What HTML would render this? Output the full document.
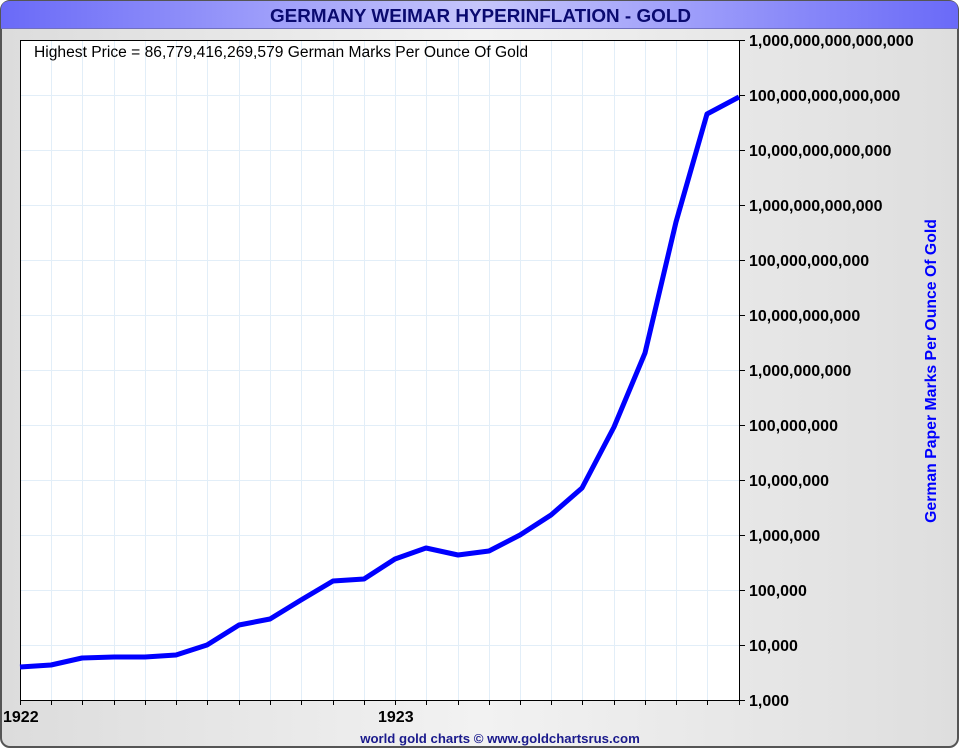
<!DOCTYPE html>
<html><head><meta charset="utf-8"><style>
html,body{margin:0;padding:0;width:960px;height:750px;overflow:hidden;background:#fff}
svg{display:block}
text{font-family:"Liberation Sans",Arial,sans-serif}
</style></head><body>
<svg width="960" height="750" viewBox="0 0 960 750" xmlns="http://www.w3.org/2000/svg">
<defs>
<linearGradient id="bg" x1="0" x2="1" y1="0" y2="0">
<stop offset="0" stop-color="#dcdcdc"/><stop offset="0.5" stop-color="#f2f2f2"/><stop offset="1" stop-color="#dedede"/>
</linearGradient>
<linearGradient id="hd" x1="0" x2="1" y1="0" y2="0">
<stop offset="0" stop-color="#6a6af8"/><stop offset="0.5" stop-color="#c6c6fb"/><stop offset="1" stop-color="#6a6af8"/>
</linearGradient>
</defs>
<rect x="0" y="0" width="960" height="750" fill="#fff"/>
<rect x="1" y="1" width="957" height="746" rx="9" fill="url(#bg)" stroke="#555" stroke-width="2"/>
<path d="M1 28 V10 Q1 1 10 1 H949 Q958 1 958 10 V28 Z" fill="url(#hd)"/>
<line x1="1" y1="28.5" x2="958" y2="28.5" stroke="#7070c0" stroke-width="1"/>
<text x="270" y="22" textLength="421" lengthAdjust="spacingAndGlyphs" font-size="18.5" font-weight="bold" fill="#0a0a70">GERMANY WEIMAR HYPERINFLATION - GOLD</text>
<rect x="20" y="40" width="720" height="660" fill="#fff"/>
<g stroke="#e2eef8" stroke-width="1">
<path d="M51.5 40V700M82.5 40V700M114.5 40V700M145.5 40V700M176.5 40V700M207.5 40V700M239.5 40V700M270.5 40V700M301.5 40V700M333.5 40V700M364.5 40V700M395.5 40V700M426.5 40V700M458.5 40V700M489.5 40V700M520.5 40V700M551.5 40V700M582.5 40V700M614.5 40V700M645.5 40V700M676.5 40V700M707.5 40V700"/>
<path d="M20 95.5H740M20 150.5H740M20 205.5H740M20 260.5H740M20 315.5H740M20 370.5H740M20 425.5H740M20 480.5H740M20 535.5H740M20 590.5H740M20 645.5H740"/>
</g>
<path d="M20.5 40.5H739.5V700.5H20.5Z" fill="none" stroke="#000" stroke-width="1"/>
<g stroke="#000" stroke-width="1">
<path d="M20.5 700V705M51.5 700V705M82.5 700V705M114.5 700V705M145.5 700V705M176.5 700V705M207.5 700V705M239.5 700V705M270.5 700V705M301.5 700V705M333.5 700V705M364.5 700V705M395.5 700V705M426.5 700V705M458.5 700V705M489.5 700V705M520.5 700V705M551.5 700V705M582.5 700V705M614.5 700V705M645.5 700V705M676.5 700V705M707.5 700V705M739.5 700V705"/>
<path d="M740 40.5H745M740 95.5H745M740 150.5H745M740 205.5H745M740 260.5H745M740 315.5H745M740 370.5H745M740 425.5H745M740 480.5H745M740 535.5H745M740 590.5H745M740 645.5H745M740 700.5H745"/>
</g>
<polyline fill="none" stroke="#0000ff" stroke-width="5" stroke-linejoin="round" points="20,667 51,665 82,658 114,657 145,657 176,655 207,645 239,625 270,619 301,600 333,581 364,579 395,559 426,548 458,555 489,551 520,535 551,515 582,488 614,427 645,353 676,222 707,114 739,97"/>
<text x="34" y="57" textLength="494" lengthAdjust="spacingAndGlyphs" font-size="15.5" fill="#000">Highest Price = 86,779,416,269,579 German Marks Per Ounce Of Gold</text>
<g font-size="16" font-weight="bold" fill="#000">
<text x="749" y="46">1,000,000,000,000,000</text>
<text x="749" y="101">100,000,000,000,000</text>
<text x="749" y="156">10,000,000,000,000</text>
<text x="749" y="211">1,000,000,000,000</text>
<text x="749" y="266">100,000,000,000</text>
<text x="749" y="321">10,000,000,000</text>
<text x="749" y="376">1,000,000,000</text>
<text x="749" y="431">100,000,000</text>
<text x="749" y="486">10,000,000</text>
<text x="749" y="541">1,000,000</text>
<text x="749" y="596">100,000</text>
<text x="749" y="651">10,000</text>
<text x="749" y="706">1,000</text>
<text x="3" y="722">1922</text>
<text x="378" y="722">1923</text>
</g>
<text transform="translate(936,371) rotate(-90)" text-anchor="middle" font-size="15.8" font-weight="bold" fill="#0000ff">German Paper Marks Per Ounce Of Gold</text>
<text x="500" y="743" text-anchor="middle" font-size="13.2" font-weight="bold" fill="#1a1a8c">world gold charts © www.goldchartsrus.com</text>
</svg>
</body></html>
